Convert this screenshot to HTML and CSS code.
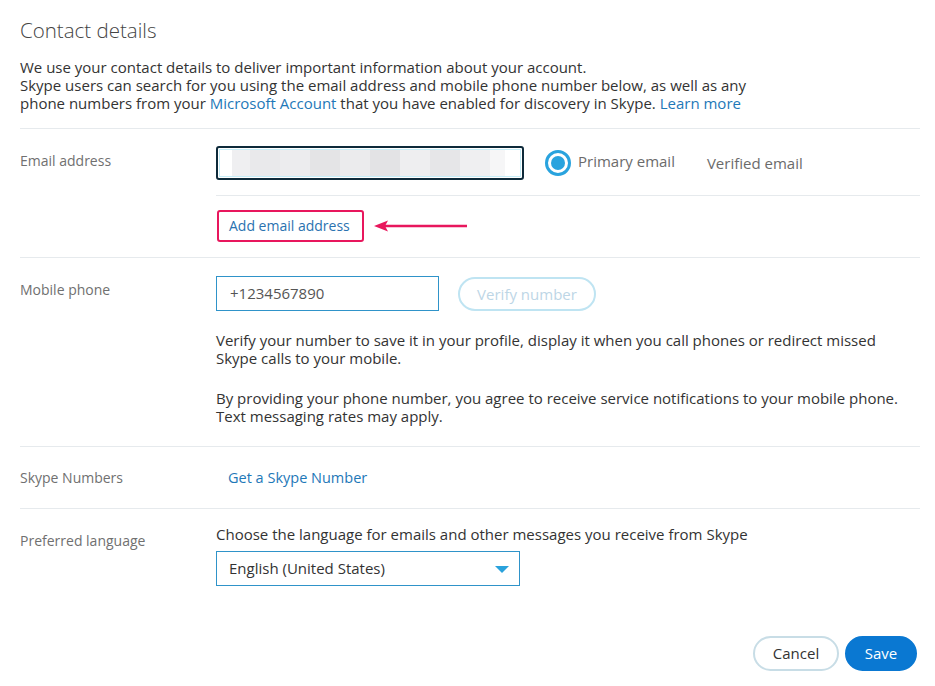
FILE: index.html
```html
<!DOCTYPE html>
<html>
<head>
<meta charset="utf-8">
<link rel="stylesheet" href="styles.css">
</head>
<body>
<div class="page">
  <h1 class="title">Contact details</h1>
  <p class="intro">We use your contact details to deliver important information about your account.<br>Skype users can search for you using the email address and mobile phone number below, as well as any<br>phone numbers from your <a class="link">Microsoft Account</a> that you have enabled for discovery in Skype. <a class="link">Learn more</a></p>

  <div class="row row-email">
    <div class="label label-email">Email address</div>
    <div class="content">
      <div class="email-line">
        <div class="email-input"><div class="blur"></div></div>
        <div class="radio"><span class="dot"></span></div>
        <span class="meta">Primary email</span>
        <span class="meta verified">Verified email</span>
      </div>
      <div class="add-line">
        <a class="add-box">Add email address</a>
        <svg class="arrow" width="96" height="14" viewBox="0 0 96 14"><path d="M12 7 H94" stroke="#e8175d" stroke-width="2.5" fill="none"/><path d="M1 7 L15 1.5 L12 7 L15 12.5 Z" fill="#e8175d"/></svg>
      </div>
    </div>
  </div>

  <div class="row row-mobile">
    <div class="label label-mobile">Mobile phone</div>
    <div class="content">
      <div class="phone-line">
        <div class="phone-input">+1234567890</div>
        <div class="verify-btn">Verify number</div>
      </div>
      <p class="note">Verify your number to save it in your profile, display it when you call phones or redirect missed<br>Skype calls to your mobile.</p>
      <p class="note second">By providing your phone number, you agree to receive service notifications to your mobile phone.<br>Text messaging rates may apply.</p>
    </div>
  </div>

  <div class="row row-numbers">
    <div class="label">Skype Numbers</div>
    <div class="content"><a class="link numbers-link">Get a Skype Number</a></div>
  </div>

  <div class="row row-lang">
    <div class="label label-lang">Preferred language</div>
    <div class="content">
      <div class="lang-text">Choose the language for emails and other messages you receive from Skype</div>
      <div class="select">English (United States)<span class="caret"></span></div>
    </div>
  </div>

  <div class="actions">
    <div class="btn cancel">Cancel</div>
    <div class="btn save">Save</div>
  </div>
</div>
</body>
</html>
```

FILE: styles.css
```css
* { box-sizing: border-box; }
html, body { margin: 0; padding: 0; background: #fff; }
body {
  font-family: "Segoe UI", "Open Sans", "Noto Sans", sans-serif;
  color: #333;
  font-size: 15px;
}
.page { width: 900px; margin-left: 20px; }
.title {
  margin: 0;
  padding-top: 15px;
  font-size: 20.5px;
  line-height: 30px;
  font-weight: 300;
  color: #444;
}
.intro {
  margin: 13px 0 0;
  font-size: 15px;
  line-height: 18px;
  padding-bottom: 16px;
  border-bottom: 1px solid #e6eaed;
}
.link { color: #1e78b8; text-decoration: none; }
.row {
  display: grid;
  grid-template-columns: 196px 1fr;
  border-bottom: 1px solid #e6eaed;
}
.label { color: #707070; font-size: 14px; line-height: 20px; }
.label-email { padding-top: 22px; }
.email-line {
  display: flex;
  align-items: center;
  padding: 17px 0 15px;
  border-bottom: 1px solid #e6eaed;
}
.email-input {
  width: 308px;
  height: 34px;
  border: 2px solid #0e2a3a;
  border-radius: 3px;
  padding: 1px;
  background: #fff;
}
.blur {
  height: 100%;
  border: 1px solid #c6eef8;
  background:
    linear-gradient(90deg, #fff 0 12px, #efeff1 12px 30px, #e9e9eb 30px 60px, #ececee 60px 90px, #e4e4e6 90px 120px, #ebebed 120px 150px, #e3e3e5 150px 180px, #eeeef0 180px 210px, #e6e6e8 210px 240px, #efeff1 240px 270px, #f6f6f7 270px 285px, #fff 285px);
}
.radio {
  margin-left: 21px;
  width: 26px;
  height: 26px;
  border-radius: 50%;
  border: 3px solid #29a3de;
  display: flex;
  align-items: center;
  justify-content: center;
}
.dot { width: 14px; height: 14px; border-radius: 50%; background: #29a3de; }
.meta { color: #6b6b6b; font-size: 15px; margin-left: 7px; position: relative; top: -2px; }
.verified { margin-left: 32px; top: 0; }
.add-line { display: flex; align-items: center; padding: 14px 0 15px; }
.add-box {
  margin-left: 1px;
  display: inline-block;
  height: 32px;
  line-height: 28px;
  padding: 0 12px 0 10px;
  border: 2px solid #e8175d;
  border-radius: 3px;
  color: #2a72b0;
  font-size: 14px;
}
.arrow { margin-left: 9px; }
.label-mobile { padding-top: 22px; }
.phone-line { display: flex; align-items: center; padding-top: 18px; }
.phone-input {
  width: 223px;
  height: 35px;
  border: 1px solid #2f93c9;
  padding-left: 13px;
  line-height: 33px;
  color: #555;
  font-size: 15px;
}
.verify-btn {
  margin-left: 19px;
  width: 138px;
  height: 34px;
  border: 2px solid #bfe4f2;
  border-radius: 17px;
  text-align: center;
  line-height: 30px;
  color: #bdd6e6;
  font-size: 15px;
}
.note { margin: 20px 0 0; font-size: 15px; line-height: 18px; }
.note.second { margin-top: 22px; margin-bottom: 21px; }
.row-numbers .label { padding: 21px 0 20px; }
.numbers-link { display: block; padding: 21px 0 0 12px; line-height: 20px; font-size: 14.5px; }
.row-lang { border-bottom: none; }
.label-lang { padding-top: 22px; }
.lang-text { padding-top: 15px; line-height: 20px; font-size: 15px; }
.select {
  margin-top: 7px;
  width: 304px;
  height: 35px;
  border: 1px solid #2f93c9;
  padding-left: 12px;
  line-height: 33px;
  font-size: 15px;
  color: #333;
  position: relative;
}
.caret {
  position: absolute;
  right: 10px;
  top: 14px;
  width: 0;
  height: 0;
  border-left: 7px solid transparent;
  border-right: 7px solid transparent;
  border-top: 7px solid #2aa2dc;
}
.actions { display: flex; justify-content: flex-end; gap: 6px; margin-top: 50px; padding-right: 3px; }
.btn {
  height: 35px;
  border-radius: 18px;
  font-size: 15px;
  line-height: 31px;
  text-align: center;
}
.cancel { width: 86px; border: 2px solid #c8dde6; color: #333; }
.save { width: 72px; background: #0a78d2; color: #fff; border: 2px solid #0a78d2; }
```
